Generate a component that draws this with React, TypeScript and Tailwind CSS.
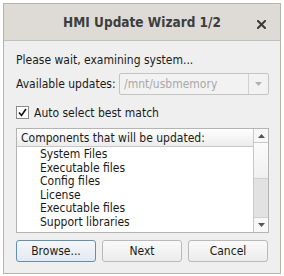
import React from "react";

const font = { fontFamily: '"DejaVu Sans Condensed", "DejaVu Sans", sans-serif' };

export default function App() {
  const items = [
    "System Files",
    "Executable files",
    "Config files",
    "License",
    "Executable files",
    "Support libraries",
  ];
  return (
    <div className="w-[284px] h-[276px] bg-white p-[3px]" style={font}>
      <div className="w-[278px] h-[271px] border border-[#b7b3ad] flex flex-col bg-[#efefef]">
        <div className="h-[37px] bg-[#dedbd7] border-b border-[#c3bfb9] flex items-center relative shrink-0">
          <div className="w-full text-center text-[13.5px] font-bold text-[#3d3d3d]">HMI Update Wizard 1/2</div>
          <svg className="absolute left-[253px] top-[16px]" width="9" height="9" viewBox="0 0 9 9">
            <path d="M1 1 L8 8 M8 1 L1 8" stroke="#3a3a3a" strokeWidth="2" strokeLinecap="square" />
          </svg>
        </div>
        <div className="flex flex-col pl-[12px] pr-[11px] pt-[12px] text-[12px] text-[#1a1a1a] leading-[14px]">
          <div className="h-[14px]">Please wait, examining system...</div>
          <div className="flex items-center mt-[6px] h-[22px]">
            <div className="w-[103px]">Available updates:</div>
            <div className="flex-1 h-[22px] border border-[#c4c4c4] rounded-[2px] bg-[#f2f2f2] flex">
              <div className="flex-1 pl-[4px] flex items-center text-[#a8a8a8]">/mnt/usbmemory</div>
              <div className="w-[20px] border-l border-[#d0d0d0] flex items-center justify-center">
                <svg width="7" height="4" viewBox="0 0 7 4"><path d="M0 0 L7 0 L3.5 4 Z" fill="#b0b0b0" /></svg>
              </div>
            </div>
          </div>
          <div className="flex items-center mt-[11px] h-[13px]">
            <div className="w-[13px] h-[13px] border border-[#8a8a8a] bg-white flex items-center justify-center">
              <svg width="9" height="9" viewBox="0 0 9 9"><path d="M1 4.5 L3.5 7.5 L8 1" stroke="#111" strokeWidth="1.6" fill="none" /></svg>
            </div>
            <div className="ml-[5px]">Auto select best match</div>
          </div>
          <div className="mt-[9px] h-[105px] border border-[#b4b4b4] bg-white flex">
            <div className="flex-1 flex flex-col">
              <div className="h-[18px] border-b border-[#c8c8c8] bg-gradient-to-b from-white to-[#ececec] pl-[4px] flex items-center">Components that will be updated:</div>
              <div className="flex flex-col pl-[23px] pt-[1px]">
                {items.map((t, i) => (
                  <div key={i} className="h-[13.6px] leading-[13.6px]">{t}</div>
                ))}
              </div>
            </div>
            <div className="w-[15px] border-l border-[#c8c8c8] flex flex-col">
              <div className="h-[14px] border-b border-[#c8c8c8] flex items-center justify-center bg-[#f7f7f7]">
                <svg width="7" height="4" viewBox="0 0 7 4"><path d="M0 4 L7 4 L3.5 0 Z" fill="#555" /></svg>
              </div>
              <div className="h-[35px] bg-gradient-to-b from-[#fbfbfb] to-[#f0f0f0]"></div>
              <div className="flex-1 bg-[#e2e2e2] border-y border-[#d0d0d0]"></div>
              <div className="h-[14px] flex items-center justify-center bg-[#f7f7f7]">
                <svg width="7" height="4" viewBox="0 0 7 4"><path d="M0 0 L7 0 L3.5 4 Z" fill="#555" /></svg>
              </div>
            </div>
          </div>
          <div className="flex mt-[7px] gap-[6px]">
            <div className="w-[80px] h-[22px] border border-[#5f8fb8] rounded-[3px] bg-gradient-to-b from-[#f4f7fa] to-[#e3e9ef] flex items-center justify-center">Browse...</div>
            <div className="w-[80px] h-[22px] border border-[#b9b9b9] rounded-[3px] bg-gradient-to-b from-[#fafafa] to-[#ececec] flex items-center justify-center">Next</div>
            <div className="w-[80px] h-[22px] border border-[#b9b9b9] rounded-[3px] bg-gradient-to-b from-[#fafafa] to-[#ececec] flex items-center justify-center">Cancel</div>
          </div>
        </div>
      </div>
    </div>
  );
}
